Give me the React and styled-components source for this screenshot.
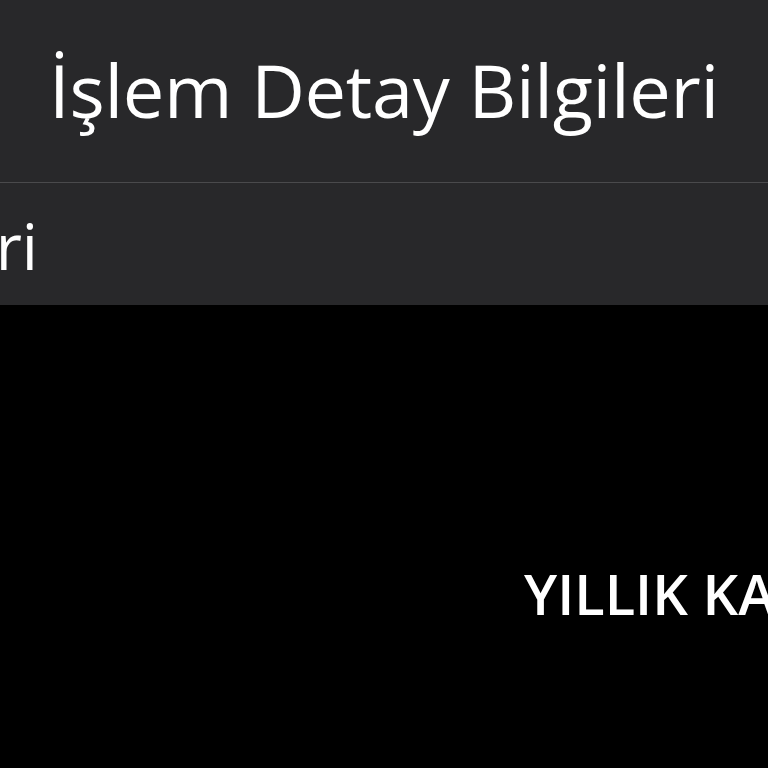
import React from 'react'
import styled, { createGlobalStyle } from 'styled-components'

const Global = createGlobalStyle`
  html, body {
    margin: 0;
    padding: 0;
    background: #000;
  }
  body {
    font-family: "Open Sans", "Noto Sans", sans-serif;
    color: #fff;
    overflow: hidden;
  }
`

const Page = styled.div`
  width: 768px;
  height: 768px;
  display: flex;
  flex-direction: column;
  background: #000;
  overflow: hidden;
`

const Header = styled.header`
  height: 182px;
  display: flex;
  align-items: center;
  justify-content: center;
  background: #28282a;
  border-bottom: 1px solid #4a4a4c;
`

const Title = styled.h1`
  margin: 0 0 4px;
  font-size: 74px;
  font-weight: 400;
  letter-spacing: -0.3px;
  white-space: nowrap;
`

const SubBar = styled.div`
  height: 122px;
  display: flex;
  align-items: center;
  background: #28282a;
  overflow: hidden;
`

const SubClip = styled.div`
  width: 38px;
  display: flex;
  justify-content: flex-end;
  margin-top: 2px;
`

const SubLabel = styled.span`
  font-size: 64px;
  white-space: nowrap;
`

const Body = styled.main`
  flex: 1;
  display: flex;
  padding-top: 260px;
  padding-left: 524px;
  overflow: hidden;
`

const Heading = styled.h2`
  margin: 0;
  font-size: 56px;
  font-weight: 600;
  white-space: nowrap;
  line-height: 1;
`

export default function App() {
  return (
    <Page>
      <Global />
      <Header>
        <Title>İşlem Detay Bilgileri</Title>
      </Header>
      <SubBar>
        <SubClip>
          <SubLabel>Müşteri Bilgileri</SubLabel>
        </SubClip>
      </SubBar>
      <Body>
        <Heading>YILLIK KAMPANYA</Heading>
      </Body>
    </Page>
  )
}
